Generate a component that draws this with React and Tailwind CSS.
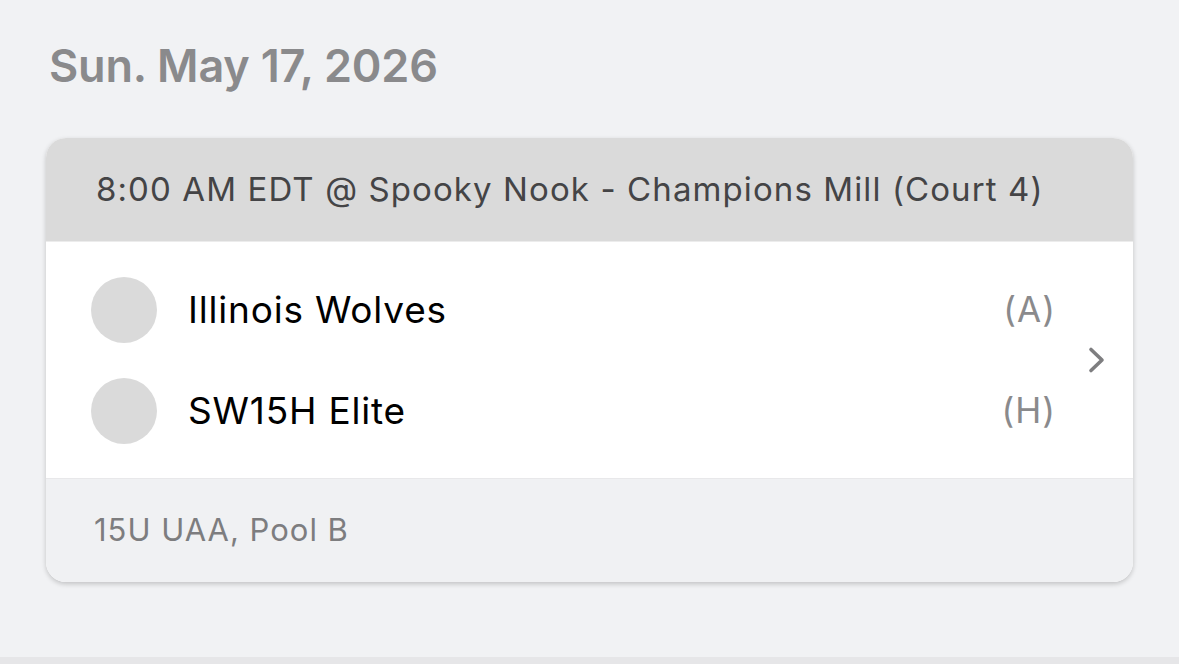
import React from "react";

export default function App() {
  return (
    <div className="w-[1179px] h-[664px] bg-[#f1f2f4] overflow-hidden relative" style={{ fontFamily: "Inter, 'Noto Sans', sans-serif" }}>
      <div className="pt-[38px] pl-[49px]">
        <h1 className="text-[45px] leading-[56px] font-semibold text-[#8a8a8c] tracking-[-0.2px]">Sun. May 17, 2026</h1>
      </div>
      <div className="ml-[46px] mt-[44px] w-[1087px] rounded-[20px] overflow-hidden shadow-[0_2px_5px_rgba(0,0,0,0.2)] bg-white">
        <div className="h-[104px] bg-[#dadada] flex items-center pl-[50px] border-b border-[#ececec]">
          <span className="text-[33px] text-[#444446] tracking-[1.1px]">8:00 AM EDT @ Spooky Nook - Champions Mill (Court 4)</span>
        </div>
        <div className="h-[236px] bg-white flex items-center relative">
          <div className="flex-1 flex flex-col gap-[35px] pl-[45px] pr-[77px]">
            <div className="flex items-center">
              <div className="w-[66px] h-[66px] rounded-full bg-[#dadada]" />
              <span className="ml-[31px] text-[37px] text-black tracking-[0.8px]">Illinois Wolves</span>
              <span className="ml-auto text-[35px] text-[#8a8a8c] tracking-[1px]">(A)</span>
            </div>
            <div className="flex items-center">
              <div className="w-[66px] h-[66px] rounded-full bg-[#dadada]" />
              <span className="ml-[31px] text-[37px] text-black tracking-[0.8px]">SW15H Elite</span>
              <span className="ml-auto text-[35px] text-[#8a8a8c] tracking-[1px]">(H)</span>
            </div>
          </div>
          <svg className="absolute" style={{ left: 1040, top: 104 }} width="24" height="30" viewBox="0 0 24 30" fill="none">
            <path d="M5 3.5 L16 14 L5 24.5" stroke="#7e7e80" strokeWidth="3.6" strokeLinecap="round" strokeLinejoin="round" />
          </svg>
        </div>
        <div className="h-[104px] bg-[#f0f1f3] border-t border-[#e8e8ea] flex items-center pl-[48px]">
          <span className="text-[31px] text-[#7d7d7f] tracking-[1px]">15U UAA, Pool B</span>
        </div>
      </div>
      <div className="absolute left-0 right-0 bottom-0 h-[7px] bg-[#e6e6e8]" />
    </div>
  );
}
